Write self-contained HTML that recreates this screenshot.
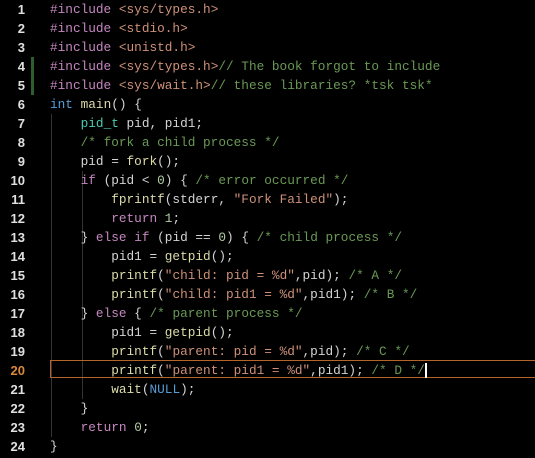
<!DOCTYPE html>
<html><head><style>
body{margin:0;background:#000;width:535px;height:458px;overflow:hidden;font-family:"Liberation Mono",monospace;font-size:12.75px;color:#d4d4d4;position:relative}
.r{position:absolute;left:0;height:19px;line-height:19px;white-space:pre;width:535px}
.n{position:absolute;left:0;width:25px;text-align:right;color:#e0e0e0;font-weight:bold;font-family:"Liberation Sans",sans-serif;font-size:13px}
.c{position:absolute;left:50px}
.k{color:#c586c0}.s{color:#ce9178}.g{color:#6a9955}.b{color:#569cd6}.f{color:#dcdcaa}.v{color:#9cdcfe}.m{color:#b5cea8}.t{color:#4ec9b0}
.guide{position:absolute;width:1px;background:#333}
</style></head><body>
<div class="guide" style="left:51px;top:114px;height:323px"></div>
<div class="guide" style="left:82px;top:171px;height:228px"></div>
<div class="guide" style="left:82px;top:247px;height:38px"></div>
<div style="position:absolute;left:31px;top:57px;width:3px;height:38px;background:#2e5e2e"></div>
<div style="position:absolute;left:50px;top:360px;width:490px;height:18px;border:1px solid #b5652a;box-sizing:border-box"></div>
<div class="r" style="top:0"><span class="n">1</span><span class="c"><span class="k">#include</span> <span class="s">&lt;sys/types.h&gt;</span></span></div>
<div class="r" style="top:19px"><span class="n">2</span><span class="c"><span class="k">#include</span> <span class="s">&lt;stdio.h&gt;</span></span></div>
<div class="r" style="top:38px"><span class="n">3</span><span class="c"><span class="k">#include</span> <span class="s">&lt;unistd.h&gt;</span></span></div>
<div class="r" style="top:57px"><span class="n">4</span><span class="c"><span class="k">#include</span> <span class="s">&lt;sys/types.h&gt;</span><span class="g">// The book forgot to include</span></span></div>
<div class="r" style="top:76px"><span class="n">5</span><span class="c"><span class="k">#include</span> <span class="s">&lt;sys/wait.h&gt;</span><span class="g">// these libraries? *tsk tsk*</span></span></div>
<div class="r" style="top:95px"><span class="n">6</span><span class="c"><span class="b">int</span> <span class="f">main</span>() {</span></div>
<div class="r" style="top:114px"><span class="n">7</span><span class="c">    <span class="t">pid_t</span> pid, pid1;</span></div>
<div class="r" style="top:133px"><span class="n">8</span><span class="c">    <span class="g">/* fork a child process */</span></span></div>
<div class="r" style="top:152px"><span class="n">9</span><span class="c">    pid = <span class="f">fork</span>();</span></div>
<div class="r" style="top:171px"><span class="n">10</span><span class="c">    <span class="k">if</span> (pid &lt; <span class="m">0</span>) { <span class="g">/* error occurred */</span></span></div>
<div class="r" style="top:190px"><span class="n">11</span><span class="c">        <span class="f">fprintf</span>(stderr, <span class="s">"Fork Failed"</span>);</span></div>
<div class="r" style="top:209px"><span class="n">12</span><span class="c">        <span class="k">return</span> <span class="m">1</span>;</span></div>
<div class="r" style="top:228px"><span class="n">13</span><span class="c">    } <span class="k">else</span> <span class="k">if</span> (pid == <span class="m">0</span>) { <span class="g">/* child process */</span></span></div>
<div class="r" style="top:247px"><span class="n">14</span><span class="c">        pid1 = <span class="f">getpid</span>();</span></div>
<div class="r" style="top:266px"><span class="n">15</span><span class="c">        <span class="f">printf</span>(<span class="s">"child: pid = %d"</span>,pid); <span class="g">/* A */</span></span></div>
<div class="r" style="top:285px"><span class="n">16</span><span class="c">        <span class="f">printf</span>(<span class="s">"child: pid1 = %d"</span>,pid1); <span class="g">/* B */</span></span></div>
<div class="r" style="top:304px"><span class="n">17</span><span class="c">    } <span class="k">else</span> { <span class="g">/* parent process */</span></span></div>
<div class="r" style="top:323px"><span class="n">18</span><span class="c">        pid1 = <span class="f">getpid</span>();</span></div>
<div class="r" style="top:342px"><span class="n">19</span><span class="c">        <span class="f">printf</span>(<span class="s">"parent: pid = %d"</span>,pid); <span class="g">/* C */</span></span></div>
<div class="r" style="top:361px"><span class="n" style="color:#d9893a">20</span><span class="c">        <span class="f">printf</span>(<span class="s">"parent: pid1 = %d"</span>,pid1); <span class="g">/* D */</span><span style="border-left:2px solid #fff"></span></span></div>
<div class="r" style="top:380px"><span class="n">21</span><span class="c">        <span class="f">wait</span>(<span class="b">NULL</span>);</span></div>
<div class="r" style="top:399px"><span class="n">22</span><span class="c">    }</span></div>
<div class="r" style="top:418px"><span class="n">23</span><span class="c">    <span class="k">return</span> <span class="m">0</span>;</span></div>
<div class="r" style="top:437px"><span class="n">24</span><span class="c">}</span></div>
</body></html>
